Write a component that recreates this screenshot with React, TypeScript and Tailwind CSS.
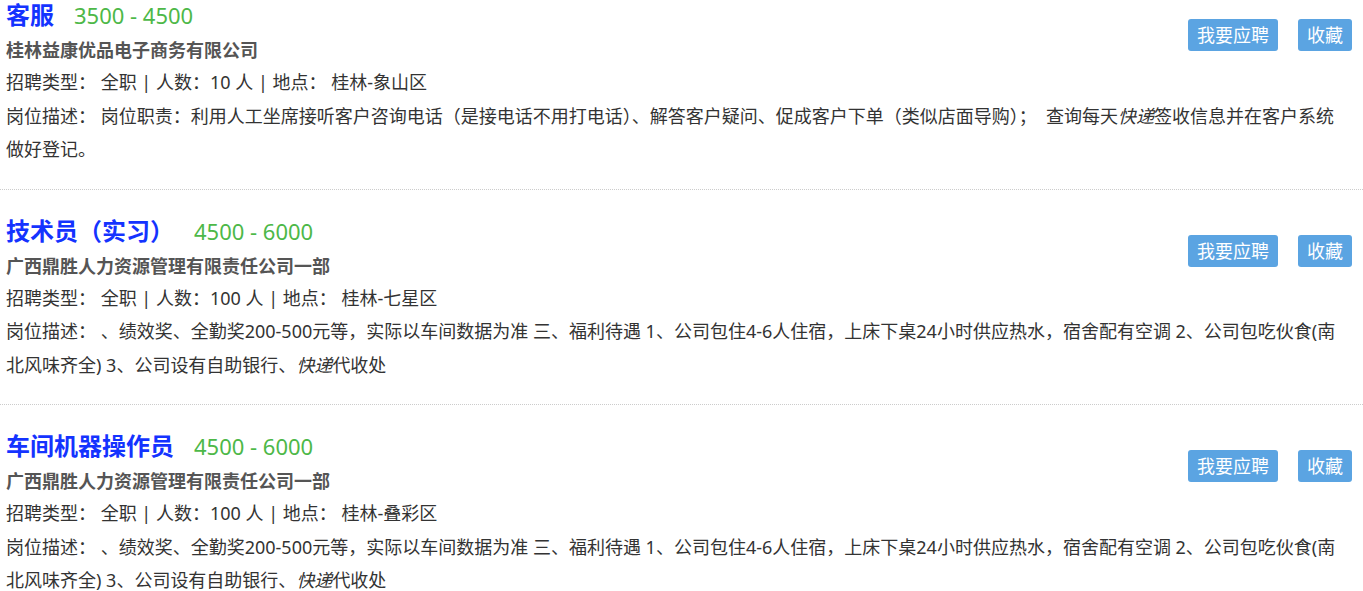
import React from "react";

type Job = {
  title: string;
  salary: string;
  company: string;
  count: string;
  place: string;
  desc: React.ReactNode;
};

const jobs: Job[] = [
  {
    title: "客服",
    salary: "3500 - 4500",
    company: "桂林益康优品电子商务有限公司",
    count: "10",
    place: "桂林-象山区",
    desc: (
      <>
        岗位职责：利用人工坐席接听客户咨询电话（是接电话不用打电话）、解答客户疑问、促成客户下单（类似店面导购）；{"\u00a0\u00a0"}查询每天<i>快递</i>签收信息并在客户系统做好登记。
      </>
    ),
  },
  {
    title: "技术员（实习）",
    salary: "4500 - 6000",
    company: "广西鼎胜人力资源管理有限责任公司一部",
    count: "100",
    place: "桂林-七星区",
    desc: (
      <>
        、绩效奖、全勤奖200-500元等，实际以车间数据为准 三、福利待遇 1、公司包住4-6人住宿，上床下桌24小时供应热水，宿舍配有空调 2、公司包吃伙食(南北风味齐全) 3、公司设有自助银行、<i>快递</i>代收处
      </>
    ),
  },
  {
    title: "车间机器操作员",
    salary: "4500 - 6000",
    company: "广西鼎胜人力资源管理有限责任公司一部",
    count: "100",
    place: "桂林-叠彩区",
    desc: (
      <>
        、绩效奖、全勤奖200-500元等，实际以车间数据为准 三、福利待遇 1、公司包住4-6人住宿，上床下桌24小时供应热水，宿舍配有空调 2、公司包吃伙食(南北风味齐全) 3、公司设有自助银行、<i>快递</i>代收处
      </>
    ),
  },
];

function JobItem({ job }: { job: Job }) {
  return (
    <div className="border-b border-dotted border-[#cccccc] pl-[6px] pr-[11px] pt-[24px] pb-[22px]">
      <div className="flex items-start justify-between">
        <div>
          <div className="flex items-baseline h-[34px] leading-[34px]">
            <span className="text-[24px] font-bold text-[#1433ff]">{job.title}</span>
            <span className="ml-[20px] text-[22px] text-[#4db848]">{job.salary}</span>
          </div>
          <div className="h-[34px] leading-[36px] text-[18px] font-bold text-[#555555]">{job.company}</div>
        </div>
        <div className="flex gap-[20px] mt-[21px]">
          <button className="h-[32px] px-[9px] rounded-[3px] bg-[#5ba4e2] text-white text-[18px] leading-[32px]">
            我要应聘
          </button>
          <button className="h-[32px] px-[9px] rounded-[3px] bg-[#5ba4e2] text-white text-[18px] leading-[32px]">
            收藏
          </button>
        </div>
      </div>
      <div className="text-[18px] leading-[33.5px] text-[#333333]">
        <div>
          招聘类型： 全职 | 人数：{job.count} 人 | 地点： {job.place}
        </div>
        <div>岗位描述： {job.desc}</div>
      </div>
    </div>
  );
}

export default function App() {
  return (
    <div
      className="w-[1363px] h-[591px] overflow-hidden bg-white"
      style={{ fontFamily: '"Noto Sans", "Noto Sans CJK SC", sans-serif' }}
    >
      <div className="-mt-[26px]">
        {jobs.map((j, i) => (
          <JobItem key={i} job={j} />
        ))}
      </div>
    </div>
  );
}
